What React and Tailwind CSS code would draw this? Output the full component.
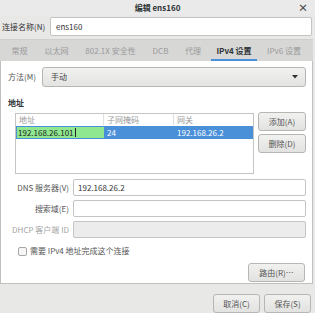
import React from 'react';

const font = { fontFamily: '"Noto Sans CJK SC", "Noto Sans", sans-serif' };

const Btn = ({ children, className = '' }) => (
  <div
    className={`flex items-center justify-center rounded-[3px] border border-[#b6b6b3] bg-gradient-to-b from-[#f1f1f0] to-[#e2e2e0] text-[8px] text-[#555] ${className}`}
  >
    {children}
  </div>
);

const FieldRow = ({ label, value, disabled, muted }) => (
  <div className="flex items-center h-[17px] mb-[4px]">
    <div className={`w-[72px] text-right pr-[4px] text-[8px] ${muted ? 'text-[#a5a5a5]' : 'text-[#555]'}`}>{label}</div>
    <div
      className={`w-[233px] h-[17px] rounded-[2px] border border-[#c4c4c2] pl-[4px] flex items-center text-[8px] text-[#333] ${
        disabled ? 'bg-[#ececec]' : 'bg-white'
      }`}
    >
      {value}
    </div>
  </div>
);

const tabs = [
  { label: '常规', w: 'w-[33px]' },
  { label: '以太网', w: 'w-[41px]' },
  { label: '802.1X 安全性', w: 'w-[67px]' },
  { label: 'DCB', w: 'w-[33px]' },
  { label: '代理', w: 'w-[32px]' },
  { label: 'IPv4 设置', w: 'w-[50px]', active: true },
  { label: 'IPv6 设置', w: 'w-[50px]' },
];

export default function App() {
  return (
    <div style={font} className="w-[315px] h-[313px] bg-[#e8e8e7] flex flex-col overflow-hidden whitespace-nowrap">
      {/* Title bar */}
      <div className="relative h-[15px] flex items-center justify-center bg-[#eaeaea]">
        <span className="text-[8px] font-bold text-[#2e3436]">编辑 ens160</span>
        <span className="absolute right-[7px] top-[0px] text-[10px] font-bold text-[#444] leading-[15px]">×</span>
      </div>

      {/* Connection name */}
      <div className="flex items-center mt-[2px] h-[19px]">
        <div className="w-[50px] pl-[2px] text-[8px] text-[#333]">连接名称(N)</div>
        <div className="w-[262px] h-[19px] bg-white border border-[#c4c4c2] rounded-[2px] pl-[5px] flex items-center text-[8px] text-[#333]">
          ens160
        </div>
      </div>

      {/* Tabs */}
      <div className="mt-[3px] h-[22px] w-[313px] bg-[#d7d7d6] border-t border-[#cfcfce] flex items-stretch pl-[3px]">
        {tabs.map((t) => (
          <div
            key={t.label}
            className={`relative flex items-center justify-center text-[8px] ${t.w} ${
              t.active ? 'text-[#2e3436] font-bold' : 'text-[#9a9a9a]'
            }`}
          >
            {t.label}
            {t.active && <div className="absolute left-[2px] right-[2px] bottom-0 h-[2px] bg-[#4a90d9]" />}
          </div>
        ))}
      </div>

      {/* Panel */}
      <div className="w-[313px] h-[223px] bg-white border border-t-0 border-[#c0c0bf] flex flex-col">
        {/* Method */}
        <div className="flex items-center mt-[6px] h-[20px]">
          <div className="w-[41px] pl-[7px] text-[8px] text-[#555]">方法(M)</div>
          <div className="w-[264px] h-[20px] rounded-[3px] border border-[#b6b6b3] bg-gradient-to-b from-[#f1f1f0] to-[#e3e3e1] flex items-center pl-[8px] pr-[7px] text-[8px] text-[#444]">
            <span className="flex-1">手动</span>
            <svg width="6" height="4" viewBox="0 0 6 4">
              <path d="M0 0h6L3 3.5z" fill="#333" />
            </svg>
          </div>
        </div>

        <div className="mt-[10px] pl-[7px] text-[8px] font-bold text-[#2e3436] leading-[12px]">地址</div>

        {/* Address table + buttons */}
        <div className="flex mt-[4px] pl-[14px]">
          <div className="w-[239px] h-[61px] border border-[#c4c4c2] bg-white flex flex-col">
            <div className="flex h-[11px] text-[8px] text-[#999] leading-[11px]">
              <div className="w-[88px] pl-[3px] border-r border-[#e0e0e0]">地址</div>
              <div className="w-[70px] pl-[3px] border-r border-[#e0e0e0]">子网掩码</div>
              <div className="flex-1 pl-[3px]">网关</div>
            </div>
            <div className="flex h-[13px] mt-[1px] bg-[#4a90d9] text-[8px] text-white leading-[13px]">
              <div className="w-[87px] ml-[1px] my-[1px] bg-[#8fe88f] text-[#222] pl-[1px] leading-[11px] flex items-center">
                <span>192.168.26.101</span>
                <span className="w-[1px] h-[9px] bg-[#222] ml-[1px]" />
              </div>
              <div className="w-[70px] pl-[3px]">24</div>
              <div className="flex-1 pl-[3px]">192.168.26.2</div>
            </div>
          </div>
          <div className="flex flex-col ml-[4px] gap-[3px] -mt-[1px]">
            <Btn className="w-[48px] h-[19px]">添加(A)</Btn>
            <Btn className="w-[48px] h-[19px]">删除(D)</Btn>
          </div>
        </div>

        {/* DNS etc */}
        <div className="mt-[5px]">
          <FieldRow label="DNS 服务器(V)" value="192.168.26.2" />
          <FieldRow label="搜索域(E)" value="" />
          <FieldRow label="DHCP 客户端 ID" value="" disabled muted />
        </div>

        <div className="flex items-center mt-[3px] pl-[17px] h-[12px]">
          <div className="w-[9px] h-[9px] border border-[#a8a8a6] rounded-[2px] bg-[#f6f6f6]" />
          <span className="ml-[3px] text-[8px] text-[#555]">需要 IPv4 地址完成这个连接</span>
        </div>

        <div className="flex justify-end pr-[7px] mt-[6px]">
          <Btn className="w-[57px] h-[19px]">路由(R)…</Btn>
        </div>
      </div>

      {/* Footer */}
      <div className="flex justify-end gap-[4px] pr-[4px] mt-[10px]">
        <Btn className="w-[47px] h-[19px]">取消(C)</Btn>
        <Btn className="w-[47px] h-[19px]">保存(S)</Btn>
      </div>
    </div>
  );
}
